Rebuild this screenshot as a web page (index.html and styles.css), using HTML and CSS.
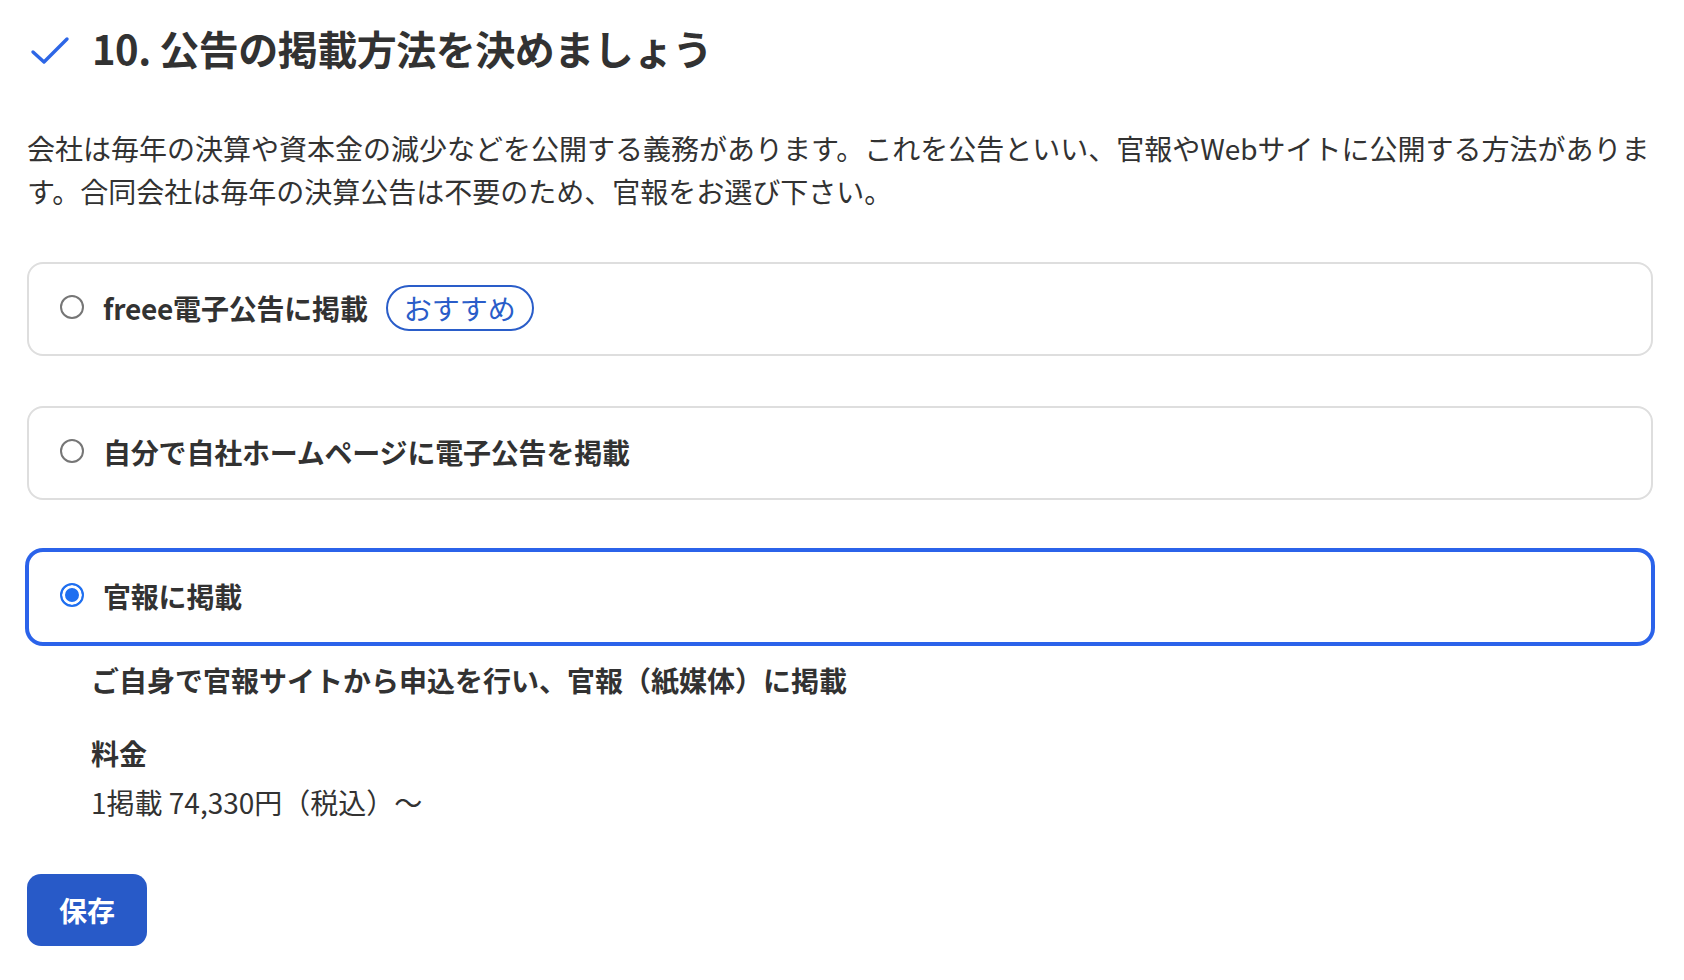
FILE: index.html
```html
<!DOCTYPE html>
<html lang="ja">
<head>
<meta charset="utf-8">
<title>公告の掲載方法</title>
<link rel="stylesheet" href="styles.css">
</head>
<body>
<main class="page">
  <h1 class="heading">
    <svg class="check" viewBox="0 0 40 40" width="40" height="40" aria-hidden="true">
      <polyline points="3,23 14,33 37,10" fill="none" stroke="#2d66e6" stroke-width="3.4" stroke-linecap="round" stroke-linejoin="round"/>
    </svg>
    <span>10. 公告の掲載方法を決めましょう</span>
  </h1>
  <p class="lead">会社は毎年の決算や資本金の減少などを公開する義務があります。これを公告といい、官報やWebサイトに公開する方法があります。合同会社は毎年の決算公告は不要のため、官報をお選び下さい。</p>

  <div class="options">
    <label class="card">
      <span class="radio"></span>
      <span class="card-label">freee電子公告に掲載</span>
      <span class="badge">おすすめ</span>
    </label>
    <label class="card">
      <span class="radio"></span>
      <span class="card-label">自分で自社ホームページに電子公告を掲載</span>
    </label>
    <label class="card card-selected">
      <span class="radio radio-checked"></span>
      <span class="card-label">官報に掲載</span>
    </label>
  </div>

  <section class="detail">
    <p class="detail-title">ご自身で官報サイトから申込を行い、官報（紙媒体）に掲載</p>
    <p class="fee-label">料金</p>
    <p class="fee-value">1掲載 74,330円（税込）〜</p>
  </section>

  <button class="save" type="button">保存</button>
</main>
</body>
</html>
```

FILE: styles.css
```css
* {
  box-sizing: border-box;
}

html, body {
  margin: 0;
  padding: 0;
  background: #ffffff;
}

body {
  font-family: "Noto Sans CJK JP", "Noto Sans", sans-serif;
  color: #323232;
}

.page {
  padding: 20px 31px 0 27px;
  display: flex;
  flex-direction: column;
}

.heading {
  margin: 0;
  display: flex;
  align-items: center;
  gap: 22px;
  height: 56px;
  font-size: 40px;
  font-weight: 700;
  line-height: 56px;
  letter-spacing: -0.5px;
}

.check {
  flex: none;
  margin-left: 3px;
  margin-top: 2px;
}

.lead {
  margin: 51px 0 0;
  font-size: 28px;
  line-height: 43px;
  font-weight: 400;
}

.options {
  margin-top: 49px;
  display: flex;
  flex-direction: column;
  gap: 50px;
}

.card {
  display: flex;
  align-items: center;
  height: 94px;
  padding: 0 32px 3px 31px;
  border: 2px solid #dedede;
  border-radius: 16px;
  background: #fff;
}

.card-selected {
  border-color: #2b63ea;
  box-shadow: 0 0 0 2px #2b63ea;
}

.radio {
  flex: none;
  width: 24px;
  height: 24px;
  border-radius: 50%;
  border: 2px solid #767676;
  margin-right: 19px;
  margin-top: -2px;
}

.radio-checked {
  border-color: #1f6ff0;
  background: #1f6ff0;
  box-shadow: inset 0 0 0 3px #ffffff;
}

.card-label {
  font-size: 28px;
  font-weight: 700;
  line-height: 42px;
  letter-spacing: -0.2px;
}

.badge {
  margin-left: 18px;
  height: 46px;
  padding: 0 16px;
  display: inline-flex;
  align-items: center;
  border: 2px solid #2a5dc9;
  border-radius: 23px;
  color: #2a5dc9;
  font-size: 28px;
  font-weight: 400;
  line-height: 1;
}

.detail {
  margin-left: 64px;
  margin-top: 15px;
}

.detail p {
  margin: 0;
  font-size: 28px;
  line-height: 42px;
}

.detail-title {
  font-weight: 700;
}

.detail .fee-label {
  margin-top: 31px;
  font-weight: 700;
}

.detail .fee-value {
  margin-top: 7px;
  font-weight: 400;
}

.save {
  align-self: flex-start;
  margin-top: 51px;
  width: 120px;
  height: 72px;
  border: none;
  border-radius: 14px;
  background: #285ac8;
  color: #ffffff;
  font-family: "Noto Sans CJK JP", "Noto Sans", sans-serif;
  font-size: 28px;
  font-weight: 700;
  cursor: pointer;
}
```
